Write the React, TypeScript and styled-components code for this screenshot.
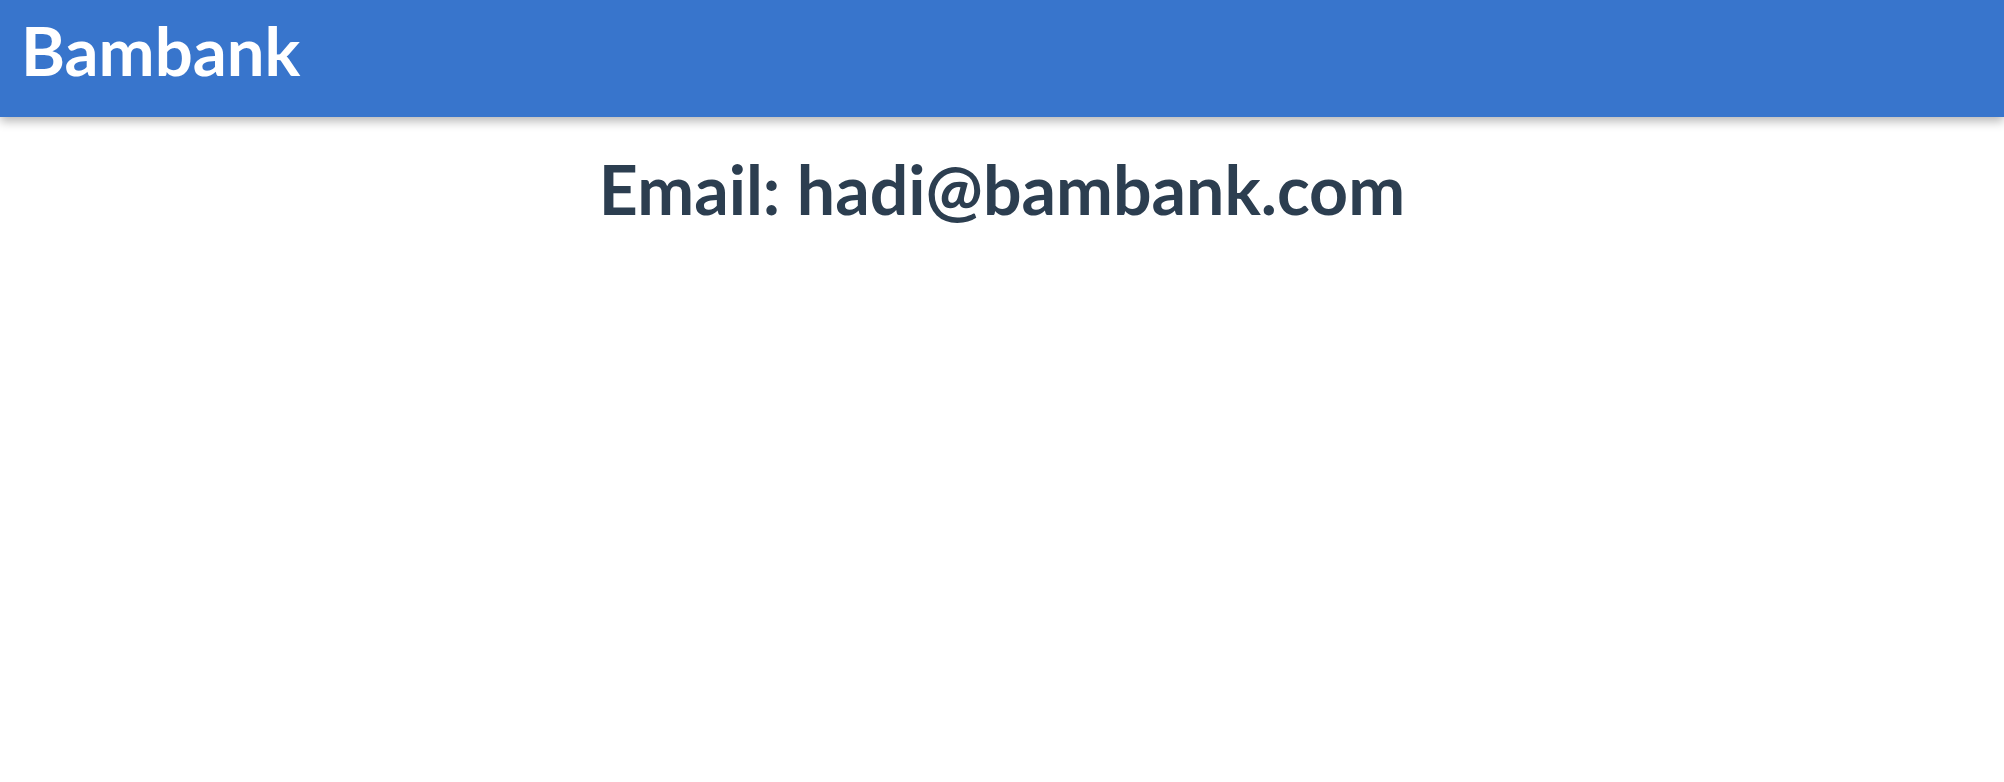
import { createGlobalStyle, styled } from 'styled-components';

const GlobalStyle = createGlobalStyle`
  html, body {
    margin: 0;
    padding: 0;
    background: #ffffff;
  }
  body {
    font-family: Lato, 'Noto Sans', sans-serif;
    color: #2c3e50;
  }
`;

const App = () => {
  return (
    <>
      <GlobalStyle />
      <Page>
        <TopBar>
          <Brand>Bambank</Brand>
        </TopBar>
        <Content>
          <EmailTitle>Email: hadi@bambank.com</EmailTitle>
        </Content>
      </Page>
    </>
  );
};

export default App;

const Page = styled.div`
  display: flex;
  flex-direction: column;
  min-height: 782px;
`;

const TopBar = styled.header`
  display: flex;
  align-items: center;
  height: 117px;
  padding: 0 21px;
  background: #3875cc;
  box-shadow: 0 4px 10px rgba(0, 0, 0, 0.3);
  box-sizing: border-box;
`;

const Brand = styled.h1`
  margin: 0 0 16px;
  font-size: 67px;
  font-weight: 700;
  color: #ffffff;
  line-height: 1;
`;

const Content = styled.main`
  display: flex;
  justify-content: center;
  padding-top: 31px;
`;

const EmailTitle = styled.h2`
  margin: 0;
  font-size: 68px;
  font-weight: 700;
  line-height: 1.2;
  color: #2c3e50;
`;
